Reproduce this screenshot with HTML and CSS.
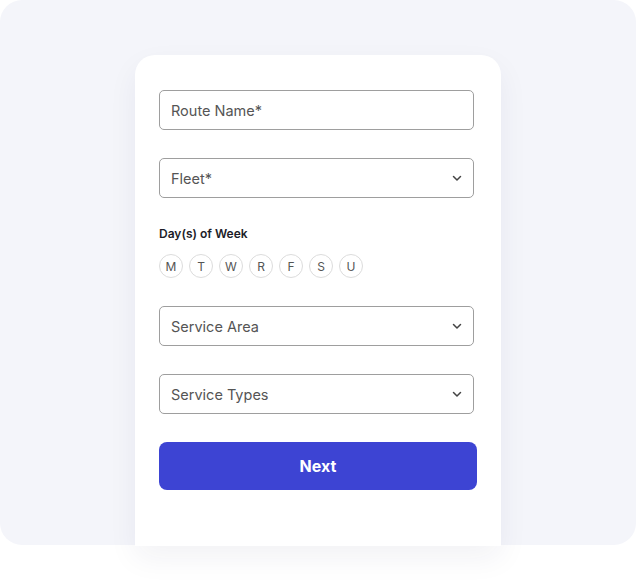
FILE: index.html
```html
<!DOCTYPE html>
<html lang="en">
<head>
    <meta charset="UTF-8">
    <meta name="viewport" content="width=device-width, initial-scale=1.0">
    <title>New Route</title>
    <link rel="stylesheet" href="styles.css">
</head>
<body>

    <div class="panel">
        <div class="card">
            <form class="route-form">
                <div class="field">
                    <span class="placeholder">Route Name*</span>
                </div>

                <div class="field select">
                    <span class="placeholder">Fleet*</span>
                    <svg class="chevron" width="12" height="12" viewBox="0 0 12 12"><path d="M2.5 4.5 6 8l3.5-3.5" fill="none" stroke="#444" stroke-width="1.5" stroke-linecap="round" stroke-linejoin="round"/></svg>
                </div>

                <div class="days">
                    <label class="days-label">Day(s) of Week</label>
                    <div class="day-list">
                        <span class="day">M</span>
                        <span class="day">T</span>
                        <span class="day">W</span>
                        <span class="day">R</span>
                        <span class="day">F</span>
                        <span class="day">S</span>
                        <span class="day">U</span>
                    </div>
                </div>

                <div class="field select">
                    <span class="placeholder">Service Area</span>
                    <svg class="chevron" width="12" height="12" viewBox="0 0 12 12"><path d="M2.5 4.5 6 8l3.5-3.5" fill="none" stroke="#444" stroke-width="1.5" stroke-linecap="round" stroke-linejoin="round"/></svg>
                </div>

                <div class="field select">
                    <span class="placeholder">Service Types</span>
                    <svg class="chevron" width="12" height="12" viewBox="0 0 12 12"><path d="M2.5 4.5 6 8l3.5-3.5" fill="none" stroke="#444" stroke-width="1.5" stroke-linecap="round" stroke-linejoin="round"/></svg>
                </div>

                <button type="button" class="next-btn">Next</button>
            </form>
        </div>
    </div>

</body>
</html>
```

FILE: styles.css
```css
* {
    box-sizing: border-box;
}
body {
    margin: 0;
    font-family: 'Inter', 'Noto Sans', sans-serif;
    background: #fff;
    height: 582px;
    overflow: hidden;
}
.panel {
    height: 545px;
    background: #f4f5fa;
    border-radius: 22px;
    padding-top: 55px;
    display: flex;
    justify-content: center;
}
.card {
    width: 366px;
    height: 491px;
    background: #fff;
    border-radius: 20px 20px 0 0;
    padding: 35px 24px 0 24px;
    box-shadow: 0 12px 30px rgba(30, 40, 80, 0.06);
}
.route-form {
    display: flex;
    flex-direction: column;
}
.field {
    width: 315px;
    height: 40px;
    border: 1px solid #9e9e9e;
    border-radius: 5px;
    padding: 0 10px 0 11px;
    display: flex;
    align-items: center;
    justify-content: space-between;
    margin-bottom: 28px;
}
.placeholder {
    font-size: 14.5px;
    color: #555;
}
.days {
    margin-bottom: 28px;
}
.days-label {
    display: block;
    font-size: 12px;
    font-weight: 600;
    color: #1c1c28;
    margin-bottom: 13px;
}
.day-list {
    display: flex;
    gap: 6px;
}
.day {
    width: 24px;
    height: 24px;
    border: 1px solid #dcdcdc;
    border-radius: 50%;
    display: flex;
    align-items: center;
    justify-content: center;
    font-size: 12px;
    color: #555;
}
.next-btn {
    width: 318px;
    height: 48px;
    border: none;
    border-radius: 8px;
    background: #3d44d3;
    color: #fff;
    font-family: inherit;
    font-size: 16px;
    font-weight: 700;
    cursor: pointer;
}
```
